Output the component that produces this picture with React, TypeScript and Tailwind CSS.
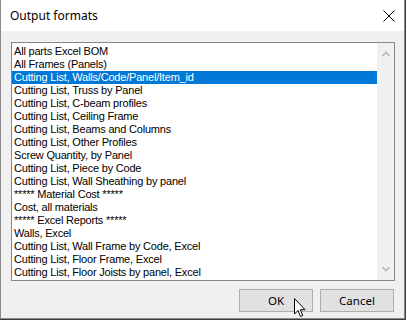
import React from 'react';

const items = [
  'All parts Excel BOM',
  'All Frames (Panels)',
  'Cutting List, Walls/Code/Panel/Item_id',
  'Cutting List, Truss by Panel',
  'Cutting List, C-beam profiles',
  'Cutting List, Ceiling Frame',
  'Cutting List, Beams and Columns',
  'Cutting List, Other Profiles',
  'Screw Quantity, by Panel',
  'Cutting List, Piece by Code',
  'Cutting List, Wall Sheathing by panel',
  '***** Material Cost *****',
  'Cost, all materials',
  '***** Excel Reports *****',
  'Walls, Excel',
  'Cutting List, Wall Frame by Code, Excel',
  'Cutting List, Floor Frame, Excel',
  'Cutting List, Floor Joists by panel, Excel',
];

const selected = 2;

export default function App() {
  return (
    <div className="w-[406px] h-[320px] bg-[#3c3c3c] overflow-hidden font-['Liberation_Sans',Arial,sans-serif]">
      <div className="relative w-[405px] h-[319px] bg-[#f0f0f0] border-x border-b border-[#8a8a8a] flex flex-col">
        {/* title bar */}
        <div className="h-[31px] bg-white flex items-center justify-between pl-[9px] pr-[9px] shrink-0">
          <span className="text-[12px] text-black font-['Noto_Sans',sans-serif] leading-none">Output formats</span>
          <svg width="12" height="12" viewBox="0 0 12 12">
            <path d="M0.5 0.5 L11.5 11.5 M11.5 0.5 L0.5 11.5" stroke="#000" strokeWidth="1" />
          </svg>
        </div>

        {/* list box */}
        <div className="mt-[11px] ml-[10px] w-[384px] h-[239px] border border-[#828790] bg-white flex">
          <div className="flex-1 pt-[2px] overflow-hidden">
            {items.map((it, i) => (
              <div
                key={i}
                className={
                  'h-[13px] pl-[2px] text-[11px] leading-[13px] tracking-[-0.2px] whitespace-nowrap ' +
                  (i === selected ? 'bg-[#0078d7] text-white' : 'text-black')
                }
              >
                {it}
              </div>
            ))}
          </div>
          <div className="w-[17px] bg-[#f0f0f0] flex flex-col justify-between items-center py-[8px]">
            <svg width="8" height="6" viewBox="0 0 8 6">
              <path d="M0.5 5 L4 1.5 L7.5 5" stroke="#b9b9b9" strokeWidth="1.6" fill="none" />
            </svg>
            <svg width="8" height="6" viewBox="0 0 8 6">
              <path d="M0.5 1 L4 4.5 L7.5 1" stroke="#b9b9b9" strokeWidth="1.6" fill="none" />
            </svg>
          </div>
        </div>

        {/* buttons */}
        <div className="flex justify-end gap-[7px] mt-[8px] pr-[10px]">
          <button className="w-[74px] h-[23px] bg-[#e1e1e1] border border-[#adadad] text-[11.5px] text-black font-['Noto_Sans',sans-serif]">
            OK
          </button>
          <button className="w-[74px] h-[23px] bg-[#e1e1e1] border border-[#adadad] text-[11.5px] text-black font-['Noto_Sans',sans-serif]">
            Cancel
          </button>
        </div>

        {/* mouse cursor */}
        <svg
          className="absolute left-[293px] top-[298px]"
          width="13"
          height="20"
          viewBox="0 0 13 20"
        >
          <path
            d="M0.5 0.5 L0.5 16 L4 12.5 L6.5 18.5 L8.8 17.5 L6.3 11.7 L11 11.7 Z"
            fill="#fff"
            stroke="#000"
            strokeWidth="1"
          />
        </svg>
      </div>
    </div>
  );
}
